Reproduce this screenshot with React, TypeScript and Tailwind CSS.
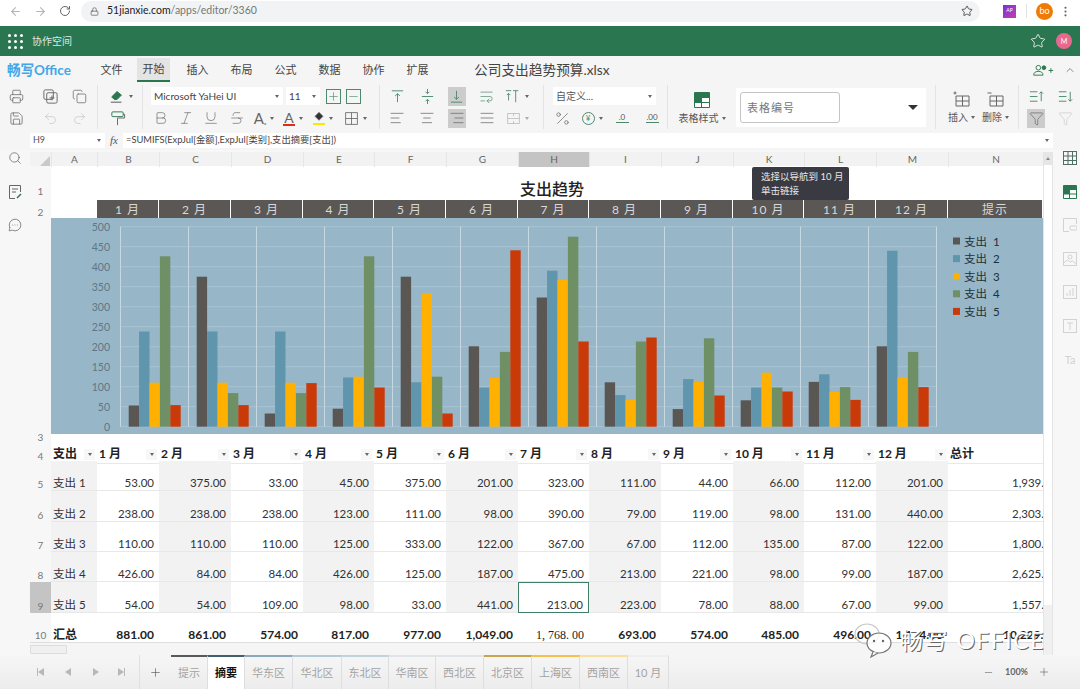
import React from "react";
import {
  AlignCenter,
  AlignJustify,
  AlignLeft,
  AlignRight,
  ArrowLeft,
  ArrowRight,
  Bold,
  ChevronUp,
  Copy,
  Italic,
  Lock,
  MessageCircleMore,
  Minus,
  MoreVertical,
  Plus,
  Printer,
  Redo2,
  RotateCw,
  Save,
  Search,
  Star,
  Strikethrough,
  Underline,
  Undo2,
  Funnel,
  WrapText,
  Percent,
} from "lucide-react";

// ── App.tsx ───────────────────────────────────────────────────────────────────
// Spreadsheet editor, budget workbook open on the summary sheet.

const COLS =
  "grid grid-cols-[21px_46px_62px_72px_72px_71px_72px_72px_71px_72px_72px_71px_72px_72px_95px]";

const LETTERS = ["A", "B", "C", "D", "E", "F", "G", "H", "I", "J", "K", "L", "M", "N"];
const MONTHS = ["1 月", "2 月", "3 月", "4 月", "5 月", "6 月", "7 月", "8 月", "9 月", "10 月", "11 月", "12 月"];

const SERIES = [
  { name: "支出 1", color: "#5a5654", values: [53, 375, 33, 45, 375, 201, 323, 111, 44, 66, 112, 201], total: "1,939.00" },
  { name: "支出 2", color: "#5f95ad", values: [238, 238, 238, 123, 111, 98, 390, 79, 119, 98, 131, 440], total: "2,303.00" },
  { name: "支出 3", color: "#ffb000", values: [110, 110, 110, 125, 333, 122, 367, 67, 112, 135, 87, 122], total: "1,800.00" },
  { name: "支出 4", color: "#6f8f64", values: [426, 84, 84, 426, 125, 187, 475, 213, 221, 98, 99, 187], total: "2,625.00" },
  { name: "支出 5", color: "#c93a08", values: [54, 54, 109, 98, 33, 441, 213, 223, 78, 88, 67, 99], total: "1,557.00" },
];

const TOTALS = ["881.00", "861.00", "574.00", "817.00", "977.00", "1,049.00", "1, 768. 00", "693.00", "574.00", "485.00", "496.00", "1,174.00"];

const ROW_HEIGHTS = ["h-[30px]", "h-[31px]", "h-[30px]", "h-[30px]", "h-[31px]"];

const SHEETS = [
  { label: "提示", w: "w-[37px]", top: "border-t-[#595959]" },
  { label: "摘要", w: "w-[37px]", top: "border-t-[#44606f]", active: true },
  { label: "华东区", w: "w-[48px]", top: "border-t-[#89aabd]" },
  { label: "华北区", w: "w-[49px]", top: "border-t-[#b3c9d5]" },
  { label: "东北区", w: "w-[47px]", top: "border-t-[#c2d2db]" },
  { label: "华南区", w: "w-[47px]", top: "border-t-[#dfe4e7]" },
  { label: "西北区", w: "w-[48px]", top: "border-t-[#dfe4e7]" },
  { label: "北京区", w: "w-[48px]", top: "border-t-[#c9a64e]" },
  { label: "上海区", w: "w-[48px]", top: "border-t-[#f2c14e]" },
  { label: "西南区", w: "w-[48px]", top: "border-t-[#f7df9e]" },
  { label: "10 月", w: "w-[41px]", top: "border-t-[#eeeeee]" },
];

function Caret({ className = "" }: { className?: string }) {
  return <span className={`inline-block h-0 w-0 border-x-[2.5px] border-t-[3px] border-x-transparent border-t-[#666] ${className}`} />;
}

function Cell({ w, active, children }: { w: string; active?: boolean; children: React.ReactNode }) {
  return (
    <div className={`${w} flex h-[22px] items-center justify-center gap-[4px] text-[#666]`}>
      {active ? <div className="flex h-[19px] w-[18px] items-center justify-center bg-[#cccccc]">{children}</div> : children}
    </div>
  );
}

function Glyph({ children, className = "h-[17px] w-[17px]" }: { children: React.ReactNode; className?: string }) {
  return (
    <svg viewBox="0 0 18 18" fill="none" stroke="currentColor" strokeWidth="1" className={className}>
      {children}
    </svg>
  );
}

function BrowserBar() {
  return (
    <div className="flex h-[26px] items-center bg-white pb-[4px] text-[#666]">
      <ArrowLeft className="ml-[9px] h-[13px] w-[13px] text-[#b5b5b5]" />
      <ArrowRight className="ml-[12px] h-[13px] w-[13px] text-[#b5b5b5]" />
      <RotateCw className="ml-[12px] h-[12px] w-[12px]" />
      <div className="ml-[10px] flex h-[21px] w-[899px] items-center rounded-full bg-[#f1f3f4] pl-[9px] text-[10.5px]">
        <Lock className="h-[9px] w-[9px]" />
        <span className="ml-[8px] text-[#222]">51jianxie.com</span>
        <span className="text-[#777]">/apps/editor/3360</span>
        <Star className="ml-auto mr-[7px] h-[12px] w-[12px] text-[#555]" />
      </div>
      <div className="ml-[23px] flex h-[13px] w-[13px] items-center justify-center bg-gradient-to-br from-[#7b2fd0] to-[#c33bb0] text-[5px] text-white">
        AP
      </div>
      <div className="ml-[10px] h-[14px] w-px bg-[#e2e2e2]" />
      <div className="ml-[9px] flex h-[17px] w-[17px] items-center justify-center rounded-full bg-[#ee7b06] text-[9px] text-white">
        bo
      </div>
      <MoreVertical className="ml-[6px] h-[13px] w-[13px]" />
    </div>
  );
}

function GreenBar() {
  return (
    <div className="flex h-[30px] items-center bg-[#2a7650] text-white">
      <div className="ml-[8px] grid grid-cols-3 gap-[3px]">
        {Array.from({ length: 9 }, (_, i) => (
          <span key={i} className="h-[3px] w-[3px] rounded-full bg-white" />
        ))}
      </div>
      <span className="ml-[9px] text-[10px] text-[#dfe9e4]">协作空间</span>
      <Star className="ml-auto h-[16px] w-[16px] stroke-[1.2]" />
      <div className="ml-[10px] mr-[8px] flex h-[16px] w-[16px] items-center justify-center rounded-full bg-[#e8688f] text-[7px]">
        M
      </div>
    </div>
  );
}

function MenuRow() {
  const menus = ["文件", "开始", "插入", "布局", "公式", "数据", "协作", "扩展"];
  return (
    <div className="flex h-[28px] items-center bg-[#f5f5f5]">
      <span className="ml-[7px] w-[88px] text-[13.5px] font-bold text-[#43a6e6]">畅写Office</span>
      {menus.map((m, i) => (
        <div
          key={m}
          className={`flex h-[24px] w-[33px] items-center justify-center text-[11px] text-[#444] ${i === 1 ? "border-b-2 border-[#2a7650] bg-[#e4e4e4]" : ""} ${i === 0 ? "mr-[9px]" : "mr-[11px]"}`}
        >
          {m}
        </div>
      ))}
      <span className="ml-[29px] text-[13.7px] text-[#444]">公司支出趋势预算.xlsx</span>
      <svg viewBox="0 0 22 14" fill="none" stroke="#2a7650" strokeWidth="1" className="ml-auto h-[13px] w-[22px]">
        <circle cx="6" cy="4" r="2.5" />
        <path d="M1 12c0-3 2-4 5-4s5 1 5 4z" />
        <circle cx="12" cy="4" r="2" fill="#2a7650" />
        <path d="M17 7h5M19.5 4.5v5" />
      </svg>
      <ChevronUp className="ml-[10px] mr-[4px] h-[12px] w-[12px] text-[#888]" />
    </div>
  );
}

function Toolbar() {
  return (
    <div className="flex h-[46px] bg-[#f5f5f5] py-px text-[#666]">
      {/* print, copy, history */}
      <div className="w-[98px] border-r border-[#e3e3e3]">
        <div className="flex">
          <Cell w="w-[33px] mr-[3px]"><Printer className="h-[15px] w-[15px] stroke-[1.2]" /></Cell>
          <Cell w="w-[29px]">
            <Glyph>
              <rect x="2" y="2" width="10" height="10" rx="1.5" />
              <rect x="5" y="5" width="11" height="11" rx="1.5" />
              <path d="M10.5 8v5M8 10.5h5" />
            </Glyph>
          </Cell>
          <Cell w="w-[29px]"><Copy className="h-[15px] w-[15px] stroke-[1.2]" /></Cell>
        </div>
        <div className="flex">
          <Cell w="w-[33px] mr-[3px]"><Save className="h-[15px] w-[15px] stroke-[1.2]" /></Cell>
          <Cell w="w-[29px]"><Undo2 className="h-[15px] w-[15px] stroke-[1.1] text-[#c4c4c4]" /></Cell>
          <Cell w="w-[29px]"><Redo2 className="h-[15px] w-[15px] stroke-[1.1] text-[#c4c4c4]" /></Cell>
        </div>
      </div>

      {/* clear, format painter */}
      <div className="w-[45px] border-r border-[#e3e3e3] pl-[5px]">
        <Cell w="w-[35px]">
          <Glyph className="h-[16px] w-[16px]">
            <path d="M3 10l6-6 5 4-5 5H6z" fill="#2a7650" stroke="#2a7650" />
            <path d="M2 16h12" stroke="#777" strokeWidth="1.4" />
          </Glyph>
          <Caret />
        </Cell>
        <Cell w="w-[28px]">
          <Glyph>
            <rect x="3" y="2" width="12" height="5" rx="1" stroke="#2a7650" />
            <path d="M15 4.5h1.5v4H9V16" />
          </Glyph>
        </Cell>
      </div>

      {/* font */}
      <div className="w-[237px] border-r border-[#e3e3e3] pl-[5px]">
        <div className="flex h-[22px] items-center pl-[3px]">
          <div className="flex h-[18px] w-[132px] items-center justify-between bg-white pl-[3px] pr-[4px] text-[10px] text-[#444]">
            Microsoft YaHei UI <Caret />
          </div>
          <div className="ml-[3px] flex h-[18px] w-[34px] items-center justify-between bg-white pl-[3px] pr-[4px] text-[10px] text-[#444]">
            11 <Caret />
          </div>
          <div className="ml-[6px] flex h-[15px] w-[15px] items-center justify-center border border-[#4d8a6d] text-[#4d8a6d]">
            <Plus className="h-[13px] w-[13px] stroke-[1.2]" />
          </div>
          <div className="ml-[5px] flex h-[15px] w-[15px] items-center justify-center border border-[#4d8a6d] text-[#4d8a6d]">
            <Minus className="h-[13px] w-[13px] stroke-[1.2]" />
          </div>
        </div>
        <div className="flex">
          <Cell w="w-[25px]"><Bold className="h-[16px] w-[16px] stroke-[1]" /></Cell>
          <Cell w="w-[25px]"><Italic className="h-[16px] w-[16px] stroke-[1]" /></Cell>
          <Cell w="w-[26px]"><Underline className="h-[16px] w-[16px] stroke-[1]" /></Cell>
          <Cell w="w-[26px]"><Strikethrough className="h-[16px] w-[16px] stroke-[1]" /></Cell>
          <Cell w="w-[28px]">
            <span className="text-[15px] leading-none">A<span className="text-[8px]">ₓ</span></span>
            <Caret />
          </Cell>
          <Cell w="w-[30px]">
            <span className="flex flex-col items-center text-[14px] leading-[13px]">
              A<span className="h-[2px] w-[12px] bg-[#e02a1c]" />
            </span>
            <Caret />
          </Cell>
          <Cell w="w-[30px]">
            <span className="flex flex-col items-center">
              <Glyph className="h-[12px] w-[12px]"><path d="M9 2l6 6-6 6-6-6z" fill="#333" /></Glyph>
              <span className="h-[2px] w-[12px] bg-[#ffe600]" />
            </span>
            <Caret />
          </Cell>
          <Cell w="w-[34px]">
            <Glyph className="h-[15px] w-[15px]">
              <rect x="2" y="2" width="14" height="14" />
              <path d="M9 2v14M2 9h14" />
            </Glyph>
            <Caret />
          </Cell>
        </div>
      </div>

      {/* alignment */}
      <div className="w-[164px] border-r border-[#e3e3e3] pl-[2px]">
        <div className="flex">
          <Cell w="w-[30px]">
            <Glyph><path d="M3 3h12M9 15V6M6.5 8.5L9 6l2.5 2.5" stroke="#4d8a6d" /></Glyph>
          </Cell>
          <Cell w="w-[30px]">
            <Glyph><path d="M3 9h12M9 1v5M9 17v-5M7 4l2 2 2-2M7 14l2-2 2 2" stroke="#4d8a6d" /></Glyph>
          </Cell>
          <Cell w="w-[29px]" active>
            <Glyph><path d="M3 15h12M9 3v9M6.5 9.5L9 12l2.5-2.5" stroke="#4d8a6d" /></Glyph>
          </Cell>
          <Cell w="w-[31px]"><WrapText className="h-[15px] w-[15px] stroke-[1.1] text-[#4d8a6d]" /></Cell>
          <Cell w="w-[30px]">
            <Glyph className="h-[16px] w-[16px]"><path d="M1 3h6M12 3v13M9 3h6M4 14V6M2 8l2-2 2 2" stroke="#4d8a6d" /></Glyph>
            <Caret />
          </Cell>
        </div>
        <div className="flex">
          <Cell w="w-[30px]"><AlignLeft className="h-[16px] w-[16px] stroke-[1.1]" /></Cell>
          <Cell w="w-[30px]"><AlignCenter className="h-[16px] w-[16px] stroke-[1.1]" /></Cell>
          <Cell w="w-[29px]" active><AlignRight className="h-[16px] w-[16px] stroke-[1.1]" /></Cell>
          <Cell w="w-[31px]"><AlignJustify className="h-[16px] w-[16px] stroke-[1.1]" /></Cell>
          <Cell w="w-[30px]">
            <Glyph className="h-[15px] w-[15px] text-[#bdbdbd]">
              <rect x="2" y="3" width="14" height="12" />
              <path d="M2 9h14M9 3v3M9 12v3" />
            </Glyph>
            <Caret className="opacity-50" />
          </Cell>
        </div>
      </div>

      {/* number format */}
      <div className="w-[124px] border-r border-[#e3e3e3] pl-[3px]">
        <div className="flex h-[22px] items-center pl-[6px]">
          <div className="flex h-[18px] w-[103px] items-center justify-between bg-white pl-[3px] pr-[4px] text-[10px] text-[#555]">
            自定义... <Caret />
          </div>
        </div>
        <div className="flex">
          <Cell w="w-[30px]"><Percent className="h-[17px] w-[17px] stroke-[1]" /></Cell>
          <Cell w="w-[30px]">
            <span className="flex h-[13px] w-[13px] items-center justify-center rounded-full border border-[#4d8a6d] text-[8px] text-[#4d8a6d]">¥</span>
            <Caret />
          </Cell>
          <Cell w="w-[30px]">
            <span className="flex flex-col items-center text-[8px] leading-[9px] text-[#555]">
              .0<span className="h-px w-[13px] bg-[#4d8a6d]" />
            </span>
          </Cell>
          <Cell w="w-[30px]">
            <span className="flex flex-col items-center text-[8px] leading-[9px] text-[#555]">
              .00<span className="h-px w-[13px] bg-[#4d8a6d]" />
            </span>
          </Cell>
        </div>
      </div>

      {/* table style */}
      <div className="flex w-[68px] flex-col items-center pt-[7px]">
        <svg viewBox="0 0 16 16" className="h-[16px] w-[16px]">
          <rect width="16" height="16" rx="1" fill="#2a7650" />
          <rect x="8" y="6" width="7" height="4" fill="#fff" />
          <rect x="1" y="11" width="6" height="4" fill="#fff" />
          <rect x="8" y="11" width="7" height="4" fill="#fff" />
        </svg>
        <span className="mt-[3px] flex items-center gap-[3px] whitespace-nowrap text-[10px] text-[#555]">
          表格样式 <Caret />
        </span>
      </div>

      <div className="w-[199px] pr-[9px] pt-[3px]">
        <div className="flex h-[39px] items-center bg-white pl-[4px] pr-[8px]">
          <div className="flex h-[31px] w-[100px] items-center rounded-[3px] border border-[#c4c4c4] pl-[6px] text-[11px] tracking-[1px] text-[#777] [font-family:'Noto_Sans_CJK_SC',serif]">
            表格编号
          </div>
          <span className="ml-auto h-0 w-0 border-x-[5px] border-t-[5px] border-x-transparent border-t-[#333]" />
        </div>
      </div>

      {/* insert, delete */}
      <div className="flex w-[84px] border-x border-[#e3e3e3] pl-[12px]">
        {["插入", "删除"].map((label, i) => (
          <div key={label} className={`flex w-[27px] flex-col items-center pt-[5px] ${i === 1 ? "ml-[7px]" : ""}`}>
            <Glyph className="h-[18px] w-[18px]">
              <path d={i === 0 ? "M3 6h13v10H3zM3 11h13M9.5 6v10M2 1.5v3M.5 3h3" : "M3 6h13v10H3zM3 11h13M9.5 6v10M.5 3h4"} />
            </Glyph>
            <span className="mt-[2px] flex items-center gap-[3px] whitespace-nowrap text-[10px] text-[#555]">
              {label} <Caret />
            </span>
          </div>
        ))}
      </div>

      {/* sort, filter */}
      <div className="flex-1 pl-[8px]">
        <div className="flex">
          <Cell w="w-[18px]">
            <Glyph><path d="M2 4h8M2 9h8M2 14h8M14 14V4M12 6l2-2 2 2" stroke="#4d8a6d" /></Glyph>
          </Cell>
          <div className="w-[11px]" />
          <Cell w="w-[18px]">
            <Glyph><path d="M2 4h8M2 9h8M2 14h8M14 4v10M12 12l2 2 2-2" stroke="#4d8a6d" /></Glyph>
          </Cell>
        </div>
        <div className="flex">
          <Cell w="w-[18px]" active><Funnel className="h-[15px] w-[15px] stroke-[1.1]" /></Cell>
          <div className="w-[11px]" />
          <Cell w="w-[18px]"><Funnel className="h-[15px] w-[15px] stroke-[1.1] text-[#c9c9c9]" /></Cell>
        </div>
      </div>
    </div>
  );
}

function FormulaBar() {
  return (
    <div className="flex h-[20px] items-center bg-[#f5f5f5] pl-[30px]">
      <div className="flex h-[15px] w-[75px] items-center justify-between bg-white pl-[3px] pr-[4px] text-[9px] text-[#555]">
        H9 <Caret />
      </div>
      <div className="ml-[3px] flex h-[15px] w-[15px] items-center pl-[2px] text-[11px] italic text-[#555] [font-family:'Liberation_Serif',serif]">
        fx
      </div>
      <div className="flex h-[15px] w-[930px] items-center justify-between bg-white pl-[3px] pr-[4px] text-[9.3px] text-[#444]">
        =SUMIFS(ExpJul[金额],ExpJul[类别],支出摘要[支出])
        <Caret />
      </div>
    </div>
  );
}

function RowNum({ n, selected, pad = "" }: { n: number; selected?: boolean; pad?: string }) {
  return (
    <div className={`flex items-end justify-center text-[10px] leading-[14px] text-[#777] ${pad} ${selected ? "bg-[#c4c4c4]" : "bg-[#f7f7f7]"}`}>
      {n}
    </div>
  );
}

function Chart() {
  const baseY = 208.7;
  const plotLeft = 69.5;
  return (
    <svg viewBox="0 0 992 216" className="block h-[216px] w-[992px] bg-[#97b6c8]">
      {Array.from({ length: 11 }, (_, i) => (
        <React.Fragment key={i}>
          <line x1={plotLeft} x2={886} y1={baseY - i * 20} y2={baseY - i * 20} stroke="#a9c3d2" strokeWidth="1" />
          <text x={59} y={baseY - i * 20 + 4} textAnchor="end" fontSize="10.5" fill="#5f7686" fontFamily="Lato, sans-serif">
            {i * 50}
          </text>
        </React.Fragment>
      ))}
      {Array.from({ length: 13 }, (_, i) => (
        <line key={i} x1={plotLeft + i * 68} x2={plotLeft + i * 68} y1={8.7} y2={baseY} stroke="#c8d8e0" strokeWidth="1" />
      ))}
      {SERIES.map((s, si) =>
        s.values.map((v, m) => (
          <rect key={m} x={plotLeft + m * 68 + 8.2 + si * 10.4} y={baseY - v * 0.4} width={10.4} height={v * 0.4} fill={s.color} />
        )),
      )}
      {SERIES.map((s, si) => (
        <React.Fragment key={s.name}>
          {si === 2 ? (
            <circle cx={905.5} cy={23 + si * 17.6} r={3.5} fill={s.color} />
          ) : (
            <rect x={902} y={19.5 + si * 17.6} width={7} height={7} fill={s.color} />
          )}
          <text x={913} y={27.5 + si * 17.6} fontSize="11.5" fill="#22303b" fontFamily="Lato, 'Noto Sans CJK SC', sans-serif" xmlSpace="preserve">
            {s.name.replace(" ", "  ")}
          </text>
        </React.Fragment>
      ))}
    </svg>
  );
}

function HeaderCell({ label, bordered = true }: { label: string; bordered?: boolean }) {
  return (
    <div className="flex items-center justify-between border-b border-[#e8e8e8] px-[2px] pt-px text-[12px] font-bold text-[#222]">
      {label}
      {bordered && (
        <span className="flex h-[11px] w-[11px] items-center justify-center bg-[#f7f7f7]">
          <Caret />
        </span>
      )}
    </div>
  );
}

function Sheet() {
  return (
    <div className="relative w-[1013px] overflow-hidden bg-white">
      {/* column letters */}
      <div className={`${COLS} h-[14px] bg-[#f2f2f2] text-[10px] text-[#666]`}>
        <div className="flex items-end justify-end pr-px">
          <span className="h-0 w-0 border-b-[11px] border-l-[11px] border-b-[#c9c9c9] border-l-transparent" />
        </div>
        {LETTERS.map((l) => (
          <div key={l} className={`flex items-center justify-center border-l border-[#e6e6e6] ${l === "H" ? "bg-[#c4c4c4]" : ""}`}>
            {l}
          </div>
        ))}
      </div>

      {/* row 1: title */}
      <div className={`${COLS} h-[34px]`}>
        <RowNum n={1} pad="pb-[2px]" />
        {LETTERS.map((l) => (
          <div key={l} className="flex items-end justify-center pr-[3px]">
            {l === "H" && <span className="whitespace-nowrap text-[16px] font-medium leading-[22px] text-[#222]">支出趋势</span>}
          </div>
        ))}
      </div>

      {/* row 2: month links */}
      <div className={`${COLS} h-[18px]`}>
        <RowNum n={2} />
        <div />
        {[...MONTHS, "提示"].map((m) => (
          <div key={m} className="flex items-center justify-center border-r border-white bg-[#5a5755] pt-px text-[12px] tracking-[1px] text-[#d9d9d9]">
            {m}
          </div>
        ))}
      </div>

      {/* row 3: chart */}
      <div className="flex h-[226px]">
        <div className="flex w-[21px] items-end justify-center bg-[#f7f7f7] text-[10px] leading-[14px] text-[#777]">3</div>
        <Chart />
      </div>

      {/* row 4: table header */}
      <div className={`${COLS} h-[17px]`}>
        <RowNum n={4} pad="pb-px" />
        <HeaderCell label="支出" />
        {MONTHS.map((m) => (
          <HeaderCell key={m} label={m} />
        ))}
        <HeaderCell label="总计" bordered={false} />
      </div>

      {/* rows 5-9 */}
      {SERIES.map((s, r) => (
        <div key={s.name} className={`${COLS} ${ROW_HEIGHTS[r]}`}>
          <RowNum n={r + 5} selected={r === 4} />
          <div className="flex items-end border-b border-[#e8e8e8] bg-[#f2f2f2] pl-[2px] text-[11.5px] leading-[14px] text-[#333]">{s.name}</div>
          {s.values.map((v, m) => (
            <div
              key={m}
              className={`flex items-end justify-end pr-[5px] text-[11.5px] leading-[14px] text-[#333] ${m % 2 === 1 ? "bg-[#f2f2f2]" : ""} ${
                r === 4 && m === 6 ? "border border-[#3f7f68]" : "border-b border-[#e8e8e8]"
              }`}
            >
              {v}.00
            </div>
          ))}
          <div className="flex items-end overflow-hidden whitespace-nowrap border-b border-[#e8e8e8] pl-[64px] text-[11.5px] leading-[14px] text-[#333]">
            {s.total}
          </div>
        </div>
      ))}

      {/* row 10: totals */}
      <div className={`${COLS} h-[29px]`}>
        <RowNum n={10} />
        <div className="flex items-end pl-[2px] text-[12px] font-bold leading-[14px] text-[#222]">汇总</div>
        {TOTALS.map((t, m) => (
          <div
            key={m}
            className={`flex items-end justify-end whitespace-nowrap pr-[5px] text-[12px] font-bold leading-[14px] text-[#222] ${m === 6 ? "[font-family:'Liberation_Serif',serif] text-[11px] font-normal" : ""}`}
          >
            {t}
          </div>
        ))}
        <div className="flex items-end overflow-hidden whitespace-nowrap pl-[55px] text-[12px] font-bold leading-[14px] text-[#222]">10,229.00</div>
      </div>

      {/* horizontal scrollbar */}
      <div className="flex h-[13px] items-center border-t border-[#dedede] bg-[#f5f5f5]">
        <div className="h-[9px] w-[37px] rounded-[1px] border border-[#dcdcdc] bg-[#f0f0f0]" />
      </div>

      {/* tooltip over row 1 */}
      <div className="absolute left-[722px] top-[15px] h-[33px] w-[97px] rounded-[2px] bg-[#3a3a42] pl-[9px] pt-[3px] text-[9.5px] leading-[14px] text-[#e6e6e6]">
        选择以导航到 10 月
        <br />
        单击链接
      </div>
    </div>
  );
}

function SideIcon({ children }: { children: React.ReactNode }) {
  return <div className="flex h-[12px] items-center justify-center">{children}</div>;
}

function RightRail() {
  return (
    <div className="flex flex-1 flex-col gap-[21.5px] bg-[#f7f7f7] pl-[7px] text-[#d2d2d2]">
      <SideIcon>
        <svg viewBox="0 0 14 14" fill="none" stroke="#4f6f60" className="h-[14px] w-[14px] shrink-0">
          <rect x=".5" y=".5" width="13" height="13" />
          <path d="M.5 5h13M.5 9.5h13M5 .5v13M9.5 .5v13" />
        </svg>
      </SideIcon>
      <SideIcon>
        <svg viewBox="0 0 14 14" className="h-[14px] w-[14px] shrink-0">
          <rect width="14" height="14" rx="1" fill="#2a7650" />
          <rect x="7" y="5" width="6" height="3.5" fill="#fff" />
          <rect x="1" y="9.5" width="5" height="3.5" fill="#fff" />
          <rect x="7" y="9.5" width="6" height="3.5" fill="#fff" />
        </svg>
      </SideIcon>
      <SideIcon>
        <svg viewBox="0 0 14 14" fill="none" stroke="currentColor" className="h-[14px] w-[14px] shrink-0">
          <path d="M6 13.5H.5V.5h13V6" />
          <rect x="7" y="8" width="7" height="4" rx="1" />
        </svg>
      </SideIcon>
      <SideIcon>
        <svg viewBox="0 0 14 14" fill="none" stroke="currentColor" className="h-[14px] w-[14px] shrink-0">
          <rect x=".5" y=".5" width="13" height="13" />
          <circle cx="7" cy="5" r="2" />
          <path d="M.5 11l4-3 3 2 2-1 4 3" />
        </svg>
      </SideIcon>
      <SideIcon>
        <svg viewBox="0 0 14 14" fill="none" stroke="currentColor" className="h-[14px] w-[14px] shrink-0">
          <rect x=".5" y=".5" width="13" height="13" />
          <path d="M4 11V8M7 11V5M10 11V3" />
        </svg>
      </SideIcon>
      <SideIcon>
        <svg viewBox="0 0 14 14" fill="none" stroke="currentColor" className="h-[14px] w-[14px] shrink-0">
          <rect x=".5" y=".5" width="13" height="13" />
          <path d="M4 4h6M7 4v7" />
        </svg>
      </SideIcon>
      <SideIcon>
        <span className="text-[11px] leading-none">Ta</span>
      </SideIcon>
    </div>
  );
}

function TabBar() {
  return (
    <div className="flex h-[34px] items-stretch bg-gradient-to-b from-[#f6f6f6] to-[#ececec]">
      <div className="ml-[26px] flex w-[114px] items-center border-r border-[#e0e0e0] text-[#b8b8b8]">
        {["w-[28px]", "w-[28px]", "w-[27px]", "w-[24px]"].map((w, i) => (
          <span key={i} className={`${w} flex items-center justify-center`}>
            {i === 0 && <span className="h-[8px] w-px bg-[#b8b8b8]" />}
            <span className={`h-0 w-0 border-y-[4px] border-y-transparent ${i < 2 ? "border-r-[6px] border-r-[#b8b8b8]" : "border-l-[6px] border-l-[#b8b8b8]"}`} />
            {i === 3 && <span className="h-[8px] w-px bg-[#b8b8b8]" />}
          </span>
        ))}
      </div>
      <div className="flex w-[31px] items-center justify-center">
        <Plus className="h-[13px] w-[13px] stroke-[1.2] text-[#555]" />
      </div>
      {SHEETS.map((t) => (
        <div
          key={t.label}
          className={`${t.w} ${t.top} flex items-center justify-center border-r border-t-[2px] border-r-[#dedede] text-[11px] ${t.active ? "bg-white font-bold text-[#111]" : "text-[#a3a3a3]"}`}
        >
          {t.label}
        </div>
      ))}
      <div className="ml-auto flex items-center pr-[30px] text-[#666]">
        <Minus className="h-[11px] w-[11px] stroke-[1.3]" />
        <span className="ml-[11px] text-[9px] font-bold">100%</span>
        <Plus className="ml-[10px] h-[12px] w-[12px] stroke-[1.3]" />
      </div>
    </div>
  );
}

export default function App() {
  return (
    <div className="relative h-[689px] w-[1080px] overflow-hidden bg-white [font-family:Lato,'Noto_Sans_CJK_SC',sans-serif]">
      <BrowserBar />
      <GreenBar />
      <MenuRow />
      <Toolbar />
      <FormulaBar />

      <div className="flex h-[505px] bg-[#f7f7f7] pt-[2px]">
        <div className="flex w-[30px] flex-col gap-[21.5px]">
          <SideIcon><Search className="h-[14px] w-[14px] shrink-0 stroke-[1.3] text-[#666]" /></SideIcon>
          <SideIcon>
            <svg viewBox="0 0 14 14" fill="none" stroke="#666" className="h-[14px] w-[14px] shrink-0">
              <path d="M7 13.5H1.5v-13h11V7M4 4h6M4 7h4" />
              <path d="M9 13l4-4" stroke="#2a7650" strokeWidth="1.5" />
            </svg>
          </SideIcon>
          <SideIcon><MessageCircleMore className="h-[14px] w-[14px] shrink-0 stroke-[1.3] text-[#666]" /></SideIcon>
        </div>
        <Sheet />
        <div className="w-[10px] border-x border-[#e4e4e4] bg-[#f0f0f0]">
          <div className="flex h-[13px] items-center justify-center bg-[#e6e6e6]">
            <span className="h-0 w-0 border-x-[2.5px] border-b-[3px] border-x-transparent border-b-[#888]" />
          </div>
          <div className="h-[440px] bg-white" />
        </div>
        <RightRail />
      </div>

      <TabBar />

      {/* account watermark */}
      <div className="absolute left-[853px] top-[622px] flex items-center">
        <svg viewBox="0 0 40 36" fill="none" strokeWidth="1.2" className="h-[36px] w-[40px]">
          <ellipse cx="14" cy="12" rx="12" ry="10" stroke="#c8c8c8" />
          <ellipse cx="26" cy="21" rx="12" ry="10" fill="#ffffffcc" stroke="#777" />
          <circle cx="21" cy="19" r="1.2" fill="#666" />
          <circle cx="30" cy="19" r="1.2" fill="#666" />
          <path d="M20 30l-2 5 7-4" stroke="#777" fill="#fff" />
        </svg>
        <span className="ml-[7px] whitespace-nowrap text-[23px] leading-none tracking-[1.5px] text-white [text-shadow:1px_1px_0_#666]">
          畅写 OFFICE
        </span>
      </div>
    </div>
  );
}
